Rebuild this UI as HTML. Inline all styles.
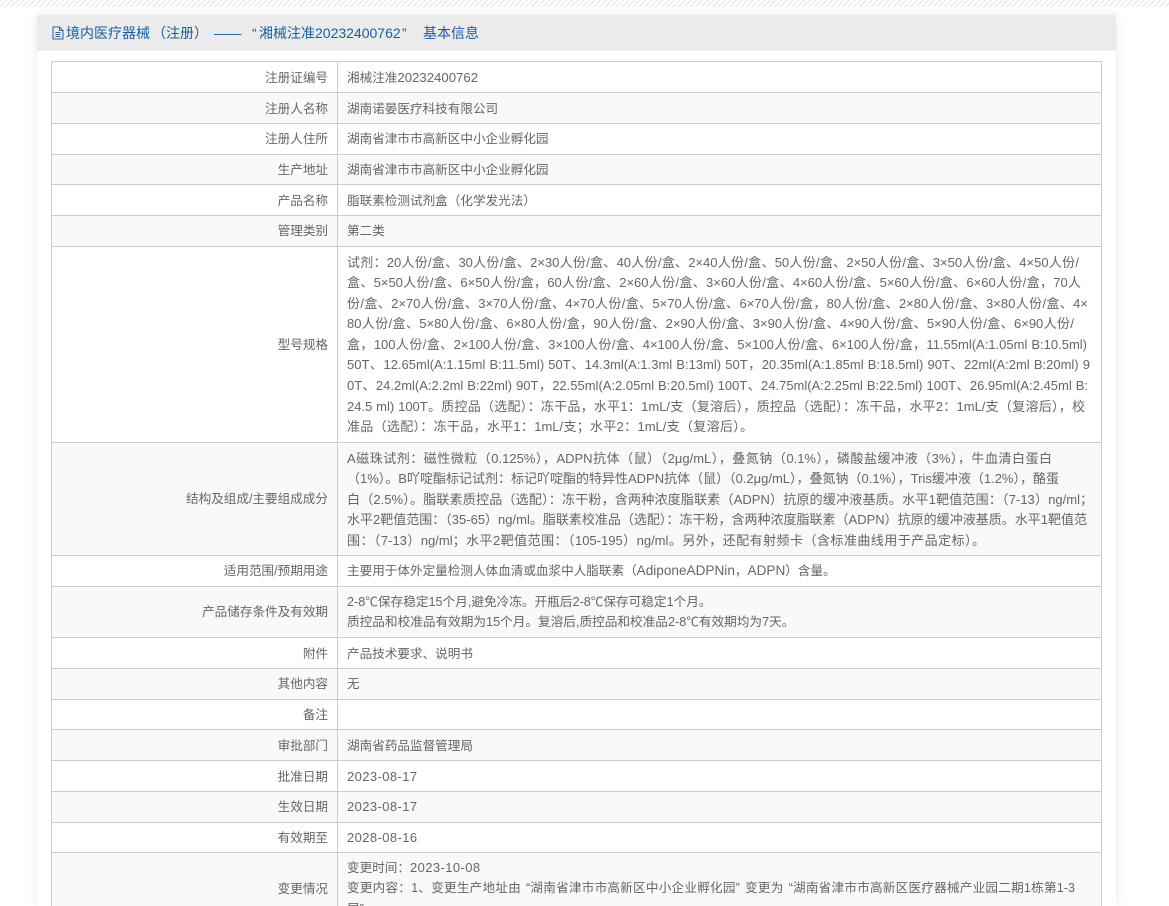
<!DOCTYPE html>
<html lang="zh-CN">
<head>
<meta charset="utf-8">
<title>基本信息</title>
<style>
html,body{margin:0;padding:0;background:#fff;width:1169px;height:906px;overflow:hidden}
body{position:relative;font-family:"Liberation Sans","Noto Sans CJK SC",sans-serif;font-size:13px;color:#666}
#stripe{position:absolute;left:0;top:0;width:1169px;height:7px;background:repeating-linear-gradient(135deg,#ebebeb 0,#ebebeb 1.5px,#fff 1.5px,#fff 4px)}
#card{position:absolute;left:37px;top:15px;width:1079px;height:891px;background:#fff;box-shadow:0 0 10px rgba(0,0,0,.09)}
#head{position:absolute;left:37px;top:15px;width:1079px;height:36px;background:#ebebeb}
#head span{position:absolute;top:9px;line-height:18px;font-size:14px;color:#1c5d9f;white-space:nowrap}
#table{position:absolute;left:51px;top:61px;width:1049px;height:845px;border-left:1px solid #ccc;border-right:1px solid #ccc;font-size:12.6px}
.r{position:absolute;left:0;width:1049px;border-top:1px solid #ccc;box-sizing:border-box}
.g{background:#f9f9f9}
.l{position:absolute;left:0;top:0;bottom:0;width:285px;border-right:1px solid #ccc;box-sizing:content-box}
.l span{position:absolute;right:9px;top:50%;margin-top:-10px;line-height:20px;white-space:nowrap}
.v{position:absolute;left:295px;white-space:nowrap;line-height:20.4px;top:5px}
.v div{height:20.4px}
.m{line-height:20.6px;top:5.5px;font-size:13px}
.m div{height:20.6px;text-align-last:justify}
.d .v{top:6px}
.d .l span{margin-top:-9px}
.n{letter-spacing:.4px;font-size:13px}
.q{padding-left:5px}
.p{padding-right:5px}
</style>
</head>
<body>
<div id="stripe"></div>
<div id="card"></div>
<div id="head">
<svg style="position:absolute;left:15px;top:11px" width="12" height="14" viewBox="0 0 12 14" fill="none" stroke="#3f659f" stroke-width="1.1"><path d="M1 1H7.5L11 4.5V13H1Z"/><path d="M7.5 1V4.5H11M3.5 6.5H8.5M3.5 8.5H8.5M3.5 10.5H8.5"/></svg>
<span style="left:29px">境内医疗器械</span>
<span style="left:115px">（</span>
<span style="left:129px">注册</span>
<span style="left:157px">）</span>
<span style="left:177px;letter-spacing:-.5px">——</span>
<span style="left:215px">“</span>
<span style="left:222px">湘械注准20232400762</span>
<span style="left:365px">”</span>
<span style="left:386px">基本信息</span>
</div>
<div id="table">
<div class="r d" style="top:0;height:31px"><div class="l"><span>注册证编号</span></div><div class="v"><div>湘械注准<span style="font-size:13.2px">20232400762</span></div></div></div>
<div class="r g d" style="top:31px;height:31px"><div class="l"><span>注册人名称</span></div><div class="v"><div>湖南诺晏医疗科技有限公司</div></div></div>
<div class="r" style="top:62px;height:31px"><div class="l"><span>注册人住所</span></div><div class="v"><div>湖南省津市市高新区中小企业孵化园</div></div></div>
<div class="r g" style="top:93px;height:30px"><div class="l"><span>生产地址</span></div><div class="v"><div>湖南省津市市高新区中小企业孵化园</div></div></div>
<div class="r d" style="top:123px;height:31px"><div class="l"><span>产品名称</span></div><div class="v"><div>脂联素检测试剂盒（化学发光法）</div></div></div>
<div class="r g" style="top:154px;height:31px"><div class="l"><span>管理类别</span></div><div class="v"><div>第二类</div></div></div>
<div class="r" style="top:185px;height:196px"><div class="l"><span>型号规格</span></div><div class="v m">
<div style="width:732px">试剂：20人份/盒、30人份/盒、2×30人份/盒、40人份/盒、2×40人份/盒、50人份/盒、2×50人份/盒、3×50人份/盒、4×50人份/</div>
<div style="width:734px">盒、5×50人份/盒、6×50人份/盒，60人份/盒、2×60人份/盒、3×60人份/盒、4×60人份/盒、5×60人份/盒、6×60人份/盒，70人</div>
<div style="width:741px">份/盒、2×70人份/盒、3×70人份/盒、4×70人份/盒、5×70人份/盒、6×70人份/盒，80人份/盒、2×80人份/盒、3×80人份/盒、4×</div>
<div style="width:727px">80人份/盒、5×80人份/盒、6×80人份/盒，90人份/盒、2×90人份/盒、3×90人份/盒、4×90人份/盒、5×90人份/盒、6×90人份/</div>
<div style="width:740px">盒，100人份/盒、2×100人份/盒、3×100人份/盒、4×100人份/盒、5×100人份/盒、6×100人份/盒，11.55ml(A:1.05ml B:10.5ml)</div>
<div style="width:743px">50T、12.65ml(A:1.15ml B:11.5ml) 50T、14.3ml(A:1.3ml B:13ml) 50T，20.35ml(A:1.85ml B:18.5ml) 90T、22ml(A:2ml B:20ml) 9</div>
<div style="width:741px">0T、24.2ml(A:2.2ml B:22ml) 90T，22.55ml(A:2.05ml B:20.5ml) 100T、24.75ml(A:2.25ml B:22.5ml) 100T、26.95ml(A:2.45ml B:</div>
<div style="width:738px">24.5 ml) 100T。质控品（选配）：冻干品，水平1：1mL/支（复溶后），质控品（选配）：冻干品，水平2：1mL/支（复溶后），校</div>
<div style="width:406px">准品（选配）：冻干品，水平1：1mL/支；水平2：1mL/支（复溶后）。</div>
</div></div>
<div class="r g" style="top:381px;height:113px"><div class="l"><span>结构及组成/主要组成成分</span></div><div class="v m">
<div style="width:705px">A磁珠试剂：磁性微粒（0.125%），ADPN抗体（鼠）（2μg/mL），叠氮钠（0.1%），磷酸盐缓冲液（3%），牛血清白蛋白</div>
<div style="width:705px">（1%）。B吖啶酯标记试剂：标记吖啶酯的特异性ADPN抗体（鼠）（0.2μg/mL），叠氮钠（0.1%），Tris缓冲液（1.2%），酪蛋</div>
<div style="width:746px">白（2.5%）。脂联素质控品（选配）：冻干粉，含两种浓度脂联素（ADPN）抗原的缓冲液基质。水平1靶值范围：（7-13）ng/ml；</div>
<div style="width:740px">水平2靶值范围：（35-65）ng/ml。脂联素校准品（选配）：冻干粉，含两种浓度脂联素（ADPN）抗原的缓冲液基质。水平1靶值范</div>
<div style="width:638px">围：（7-13）ng/ml；水平2靶值范围：（105-195）ng/ml。另外，还配有射频卡（含标准曲线用于产品定标）。</div>
</div></div>
<div class="r" style="top:494px;height:31px"><div class="l"><span>适用范围/预期用途</span></div><div class="v"><div>主要用于体外定量检测人体血清或血浆中人脂联素（<span style="font-size:13.6px">AdiponeADPNin</span>，<span style="font-size:13.6px">ADPN</span>）含量。</div></div></div>
<div class="r g" style="top:525px;height:51px"><div class="l"><span>产品储存条件及有效期</span></div><div class="v" style="line-height:20.8px;font-size:12.65px">
<div>2-8℃保存稳定15个月,避免冷冻。开瓶后2-8℃保存可稳定1个月。</div>
<div>质控品和校准品有效期为15个月。复溶后,质控品和校准品2-8℃有效期均为7天。</div>
</div></div>
<div class="r d" style="top:576px;height:31px"><div class="l"><span>附件</span></div><div class="v"><div>产品技术要求、说明书</div></div></div>
<div class="r g" style="top:607px;height:31px"><div class="l"><span>其他内容</span></div><div class="v"><div>无</div></div></div>
<div class="r" style="top:638px;height:30px"><div class="l"><span>备注</span></div></div>
<div class="r g d" style="top:668px;height:31px"><div class="l"><span>审批部门</span></div><div class="v"><div>湖南省药品监督管理局</div></div></div>
<div class="r d" style="top:699px;height:31px"><div class="l"><span>批准日期</span></div><div class="v"><div class="n">2023-08-17</div></div></div>
<div class="r g" style="top:730px;height:31px"><div class="l"><span>生效日期</span></div><div class="v"><div class="n">2023-08-17</div></div></div>
<div class="r" style="top:761px;height:30px"><div class="l"><span>有效期至</span></div><div class="v"><div class="n">2028-08-16</div></div></div>
<div class="r g" style="top:791px;height:72px"><div class="l"><span>变更情况</span></div><div class="v" style="top:5px">
<div>变更时间：<span class="n">2023-10-08</span></div>
<div style="width:728px;text-align-last:justify">变更内容：1、变更生产地址由<span class="q">“</span>湖南省津市市高新区中小企业孵化园<span class="p">”</span>变更为<span class="q">“</span>湖南省津市市高新区医疗器械产业园二期1栋第1-3</div>
<div>层”</div>
</div></div>
</div>
</body>
</html>
